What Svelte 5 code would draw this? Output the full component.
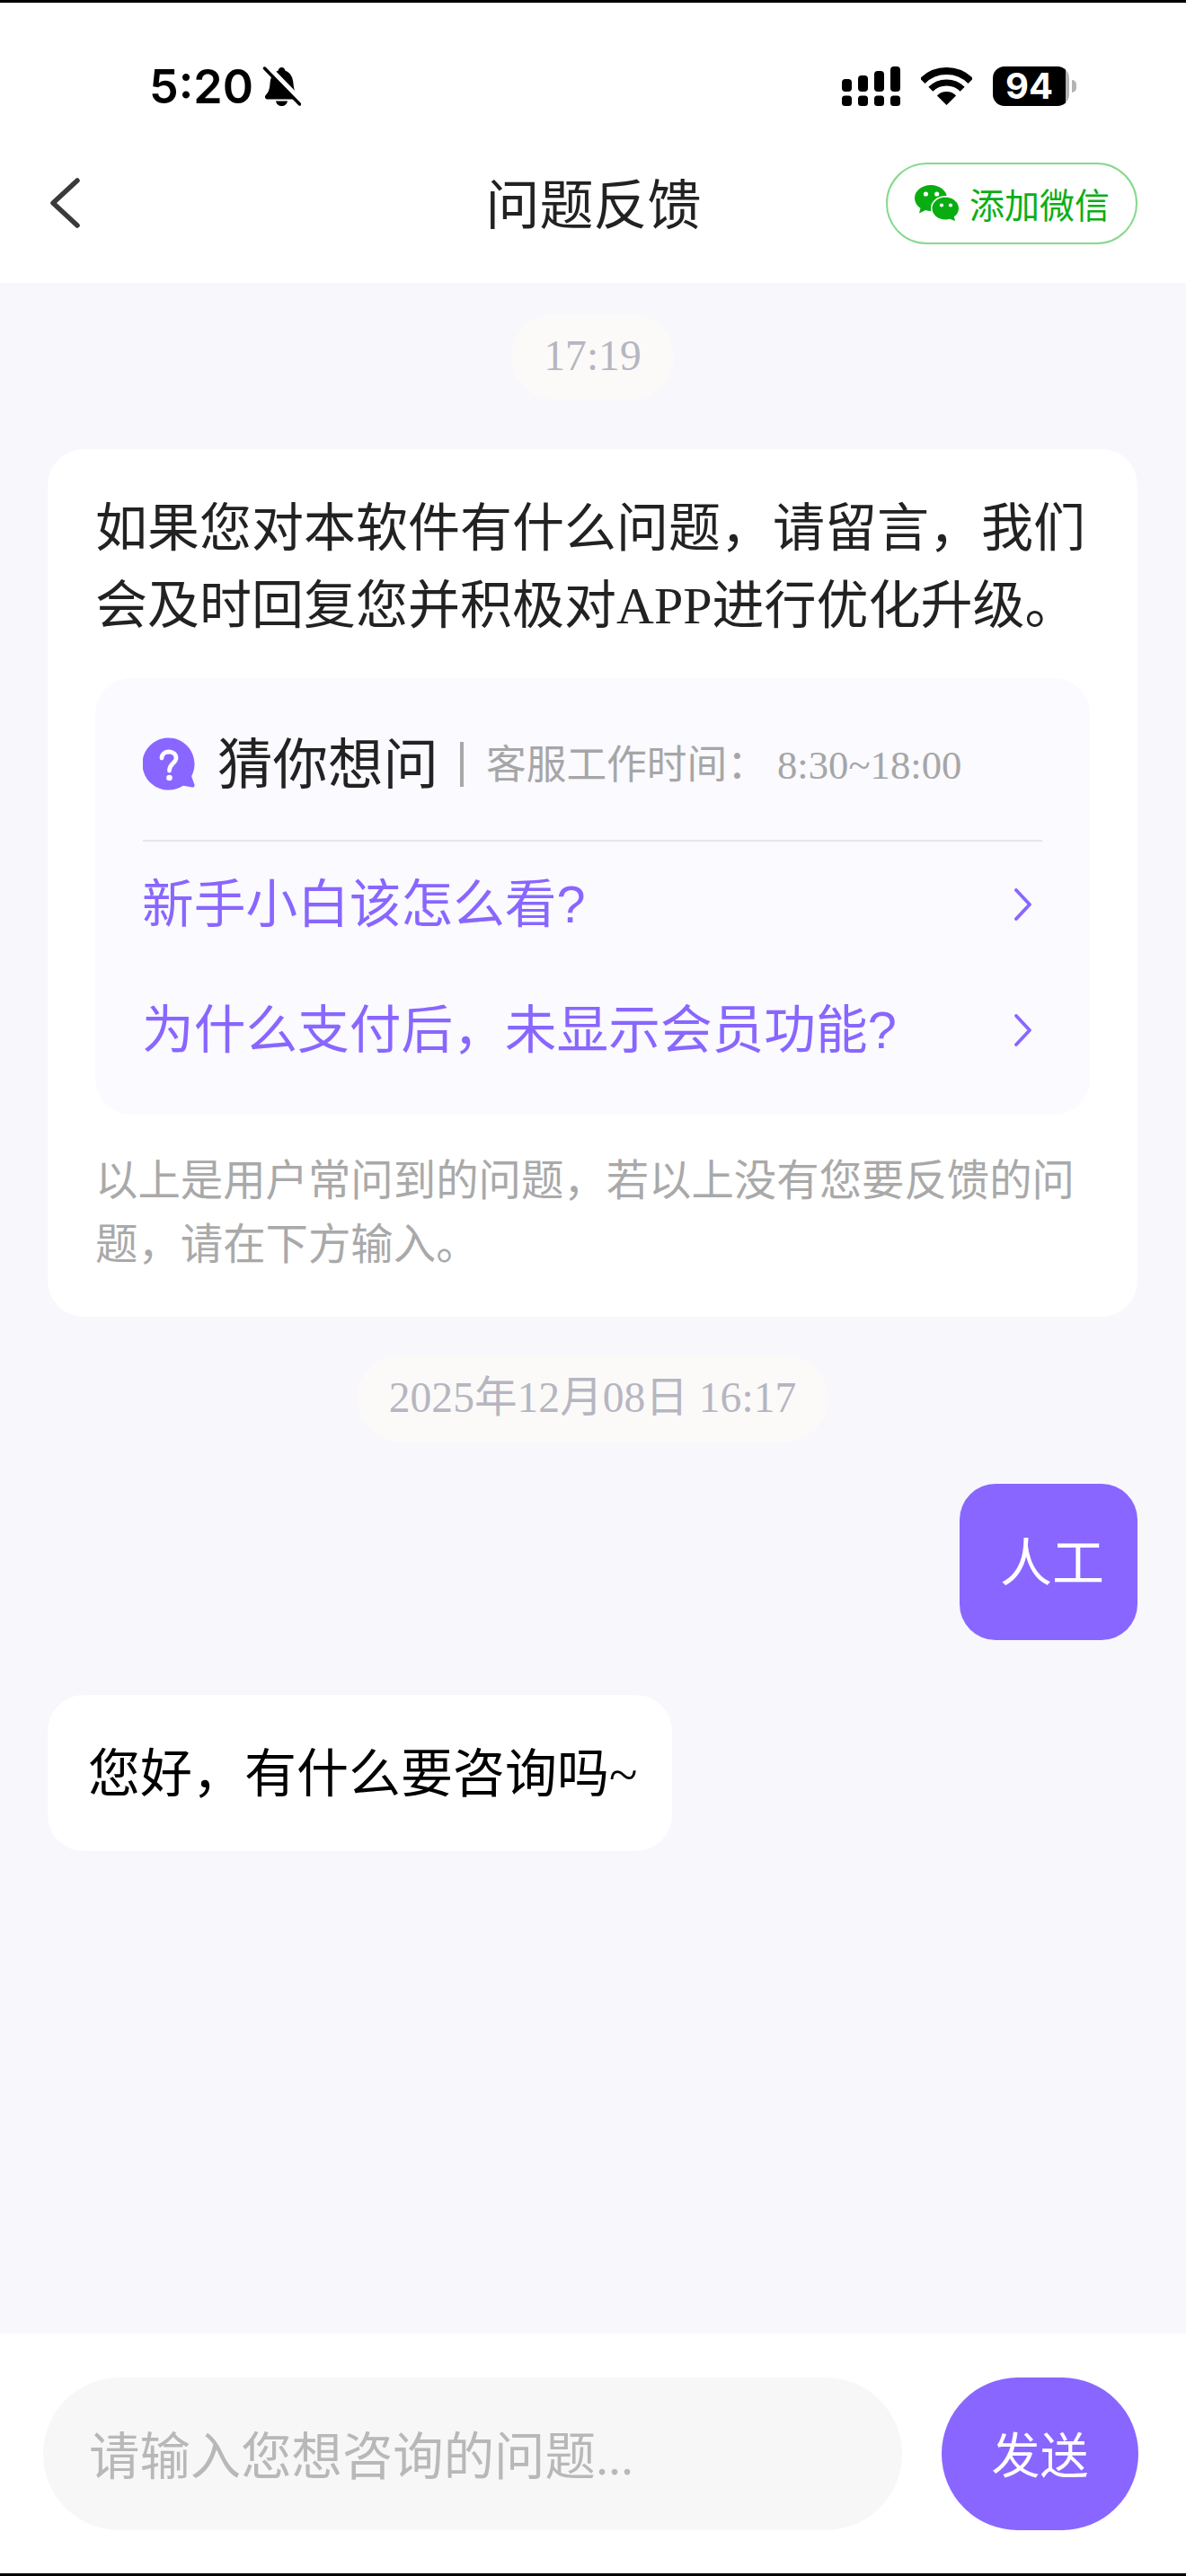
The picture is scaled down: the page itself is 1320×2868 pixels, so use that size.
<script>
  const faqs = ['新手小白该怎么看', '为什么支付后，未显示会员功能'];
</script>

<div class="app">
  <header class="top">
    <div class="status">
      <div class="status-left">
        <span class="clock">5:20</span>
        <svg class="bell" width="43" height="44" viewBox="0 0 43 44" aria-hidden="true">
          <path d="M21.5 1c2 0 3.5 1.5 3.8 3.5C31 6.5 34 12 34.5 19c.5 7 2 10 4.5 12.5 2 2.5 1 5-2 5H6c-3 0-4-2.5-2-5C6.5 29 8 26 8.5 19 9 12 12 6.5 17.7 4.500 18 2.500 19.500 1 21.500 1z" fill="#000"/>
          <path d="M15 38.500h13c-.5 3.500-3.200 5.500-6.500 5.500S15.500 42 15 38.500z" fill="#000"/>
          <line x1="5" y1="0" x2="46" y2="42" stroke="#fff" stroke-width="7"/>
          <line x1="2.500" y1="2" x2="41.500" y2="42" stroke="#000" stroke-width="3.500" stroke-linecap="round"/>
        </svg>
      </div>
      <div class="status-right">
        <svg width="65" height="44" viewBox="0 0 65 44" aria-hidden="true">
          <g fill="#000">
            <rect x="0" y="14" width="11" height="14" rx="4"/>
            <rect x="18" y="10" width="11" height="18" rx="4"/>
            <rect x="36" y="5" width="11" height="23" rx="4"/>
            <rect x="54" y="0" width="11" height="28" rx="4"/>
            <rect x="0" y="32.500" width="11" height="11.500" rx="3.500"/>
            <rect x="18" y="32.500" width="11" height="11.500" rx="3.500"/>
            <rect x="36" y="32.500" width="11" height="11.500" rx="3.500"/>
            <rect x="54" y="32.500" width="11" height="11.500" rx="3.500"/>
          </g>
        </svg>
        <svg width="57" height="42" viewBox="0 0 57 42" aria-hidden="true">
          <path d="M1.630 15.130A38 38 0 0 1 55.370 15.130" fill="none" stroke="#000" stroke-width="8"/>
          <path d="M10.820 24.320A25 25 0 0 1 46.180 24.320" fill="none" stroke="#000" stroke-width="7"/>
          <path d="M28.500 42L17.900 31.400A15 15 0 0 1 39.100 31.400Z" fill="#000"/>
        </svg>
        <div class="battery-wrap">
          <div class="battery">94</div>
          <div class="nub"></div>
        </div>
      </div>
    </div>
    <nav class="nav">
      <svg class="back" width="34" height="58" viewBox="0 0 34 58" aria-hidden="true">
        <polyline points="31,4 4,29 31,54" fill="none" stroke="#3a3a3a" stroke-width="5.500" stroke-linecap="round" stroke-linejoin="round"/>
      </svg>
      <h1 class="title">问题反馈</h1>
      <button class="wechat">
        <svg width="50" height="40" viewBox="0 0 50 40" aria-hidden="true">
          <path d="M18 0C8 0 0 6.500 0 14.500c0 4.500 2.500 8.500 6.500 11.200L5 31.500l7-3.400c2 .6 4 .9 6 .9 10 0 18-6.500 18-14.500S28 0 18 0z" fill="#09ad12"/>
          <ellipse cx="34.500" cy="26" rx="16.500" ry="14" fill="#fff"/>
          <path d="M34.500 13.500C26.200 13.500 19.500 19 19.500 26s6.700 12.500 15 12.500c1.600 0 3.200-.2 4.700-.7l5.800 2.200-1.200-4.700c3.300-2.300 5.200-5.600 5.200-9.300 0-7-6.700-12.500-15.500-12.500z" fill="#09ad12"/>
          <circle cx="12.400" cy="10" r="2.600" fill="#fff"/>
          <circle cx="24.700" cy="10" r="2.600" fill="#fff"/>
          <circle cx="30" cy="22.500" r="2.100" fill="#fff"/>
          <circle cx="40" cy="22.500" r="2.100" fill="#fff"/>
        </svg>
        <span>添加微信</span>
      </button>
    </nav>
  </header>

  <main class="chat">
    <div class="stamp first">17:19</div>

    <section class="card">
      <p class="intro">如果您对本软件有什么问题，请留言，我们会及时回复您并积极对APP进行优化升级。</p>
      <div class="guess">
        <div class="guess-head">
          <svg width="58" height="60" viewBox="0 0 58 60" aria-hidden="true">
            <path d="M28.500.500C44.500.500 57.500 13.500 57.500 29.500c0 5-1.200 9.600-3.400 13.700l3.300 9.300c.6 1.800-.6 3.300-2.400 3l-10.200-1.800c-4.500 3-10.200 4.800-16.300 4.800C12.500 58.500-.500 45.500-.500 29.500S12.500.500 28.500.500z" fill="#8966ff"/>
            <path d="M21 23c0-4.500 3.700-7 8-7 4.500 0 8 2.800 8 7 0 5.500-7.500 5.800-7.500 14" fill="none" stroke="#fff" stroke-width="4.800" stroke-linecap="round"/>
            <circle cx="29.500" cy="45" r="3.300" fill="#fff"/>
          </svg>
          <span class="guess-title">猜你想问</span>
          <span class="sep"></span>
          <span class="guess-sub">客服工作时间： 8:30~18:00</span>
        </div>
        {#each faqs as faq}
          <div class="faq">
            <span>{faq}<span class="q">?</span></span>
            <svg width="22" height="38" viewBox="0 0 22 38" aria-hidden="true">
              <polyline points="3,3 18,19 3,35" fill="none" stroke="#8966ff" stroke-width="3.800" stroke-linecap="round" stroke-linejoin="round"/>
            </svg>
          </div>
        {/each}
      </div>
      <p class="note">以上是用户常问到的问题，若以上没有您要反馈的问题，请在下方输入。</p>
    </section>

    <div class="stamp second">2025年12月08日 16:17</div>

    <div class="bubble mine">人工</div>
    <div class="bubble theirs">您好，有什么要咨询吗~</div>
  </main>

  <footer class="composer">
    <div class="input">请输入您想咨询的问题...</div>
    <button class="send">发送</button>
  </footer>
</div>

<style>
  :global(body) {
    margin: 0;
    background: #f7f7fc;
  }

  .app {
    box-sizing: border-box;
    height: 2868px;
    display: flex;
    flex-direction: column;
    border-top: 3px solid #000;
    border-bottom: 3px solid #000;
    background: #f7f7fc;
    font-family: "Liberation Serif", "Noto Sans CJK SC", serif;
    color: #222;
  }

  .top {
    background: #fff;
  }

  .status {
    box-sizing: border-box;
    height: 136px;
    padding: 50px 122px 0 166px;
    display: flex;
    align-items: center;
    justify-content: space-between;
  }

  .status-left {
    display: flex;
    align-items: center;
    gap: 14px;
  }

  .clock {
    padding-top: 2px;
    font-family: Inter, "Liberation Sans", sans-serif;
    font-weight: 600;
    font-size: 52px;
    line-height: 44px;
    color: #000;
    width: 112px;
    white-space: nowrap;
  }

  .status-right {
    display: flex;
    align-items: center;
    gap: 23px;
  }

  .status-right svg {
    display: block;
  }

  .battery-wrap {
    display: flex;
    align-items: center;
    gap: 3px;
  }

  .battery {
    box-sizing: border-box;
    width: 85px;
    height: 44px;
    border-radius: 13px;
    background: linear-gradient(to right, #000 95%, #b4b4b4 95%);
    color: #fff;
    font-family: Inter, "Liberation Sans", sans-serif;
    font-weight: 700;
    font-size: 40px;
    line-height: 44px;
    text-align: center;
    padding-right: 4px;
  }

  .nub {
    width: 5px;
    height: 14px;
    border-radius: 0 7px 7px 0;
    background: #b4b4b4;
  }

  .nav {
    box-sizing: border-box;
    height: 174px;
    margin-bottom: 2px;
    padding: 0 54px 0 55px;
    display: grid;
    grid-template-columns: 1fr auto 1fr;
    align-items: center;
  }

  .back {
    display: block;
  }

  .title {
    margin: 0;
    padding-bottom: 4px;
    font-family: "Noto Sans CJK SC", sans-serif;
    font-weight: 400;
    font-size: 60px;
    line-height: 70px;
    color: #222;
  }

  .wechat {
    justify-self: end;
    box-sizing: border-box;
    width: 280px;
    height: 91px;
    padding: 0 0 0 30px;
    display: flex;
    align-items: center;
    gap: 11px;
    background: #fff;
    border: 2px solid #85d98c;
    border-radius: 46px;
    font-family: "Noto Sans CJK SC", sans-serif;
    font-size: 39px;
    line-height: 50px;
    color: #0cae16;
  }

  .wechat svg {
    flex: none;
    display: block;
  }

  .chat {
    flex: 1;
    min-height: 0;
    padding: 34px 54px 0 53px;
    display: flex;
    flex-direction: column;
  }

  .stamp {
    align-self: center;
    box-sizing: border-box;
    height: 96px;
    padding: 0 36px;
    border-radius: 48px;
    background: #fbfaf9;
    color: #b6b6c1;
    font-size: 47.600px;
    line-height: 94px;
    white-space: nowrap;
  }

  .card {
    margin-top: 55px;
    padding: 46px 53px 44px;
    background: #fff;
    border-radius: 40px;
  }

  .intro {
    margin: 0;
    font-size: 58px;
    line-height: 86px;
    color: #222;
  }

  .guess {
    margin-top: 37px;
    padding: 66px 53px 24px;
    background: #fafaff;
    border-radius: 40px;
  }

  .guess-head {
    height: 60px;
    padding-bottom: 54px;
    border-bottom: 2px solid #e6e6e8;
    display: flex;
    align-items: center;
  }

  .guess-head svg {
    flex: none;
    display: block;
  }

  .guess-title {
    margin-left: 25px;
    padding-top: 2px;
    font-size: 61.500px;
    line-height: 60px;
    color: #222;
    white-space: nowrap;
  }

  .sep {
    flex: none;
    width: 4px;
    height: 50px;
    margin: 0 25px 0 24px;
    background: #a8a8a8;
  }

  .guess-sub {
    padding-top: 2px;
    font-size: 44.700px;
    line-height: 60px;
    color: #a6a6a6;
    white-space: nowrap;
  }

  .faq {
    height: 140px;
    padding-right: 10px;
    display: flex;
    align-items: center;
    justify-content: space-between;
    font-size: 57.700px;
    line-height: 70px;
    color: #8966ff;
  }

  .faq > span {
    margin-left: -1px;
    padding-top: 1px;
  }

  .faq svg {
    display: block;
  }

  .q {
    font-family: "Liberation Sans", sans-serif;
  }

  .note {
    margin: 39px 0 0;
    font-size: 47.400px;
    line-height: 71px;
    color: #a9a9a9;
  }

  .stamp.second {
    margin-top: 43px;
  }

  .bubble {
    font-size: 58px;
    line-height: 86px;
    border-radius: 40px;
    white-space: nowrap;
  }

  .mine {
    align-self: flex-end;
    margin-top: 47px;
    padding: 47px 37px 41px 45px;
    background: #8966ff;
    color: #fff;
  }

  .theirs {
    align-self: flex-start;
    margin-top: 61px;
    padding: 46px 39px 42px 45px;
    background: #fff;
    color: #000;
  }

  .composer {
    box-sizing: border-box;
    height: 267px;
    flex: none;
    padding: 49px 53px 48px 48px;
    display: flex;
    gap: 44px;
    background: #fff;
  }

  .input {
    flex: 1;
    box-sizing: border-box;
    padding: 0 0 3px 51px;
    display: flex;
    align-items: center;
    border-radius: 85px;
    background: #f7f7f7;
    font-size: 56.400px;
    color: #b8b8b8;
    white-space: nowrap;
  }

  .send {
    width: 219px;
    padding: 0 0 3px;
    border: 0;
    border-radius: 85px;
    background: #8966ff;
    color: #fff;
    font-family: "Noto Sans CJK SC", sans-serif;
    font-size: 54px;
  }
</style>
